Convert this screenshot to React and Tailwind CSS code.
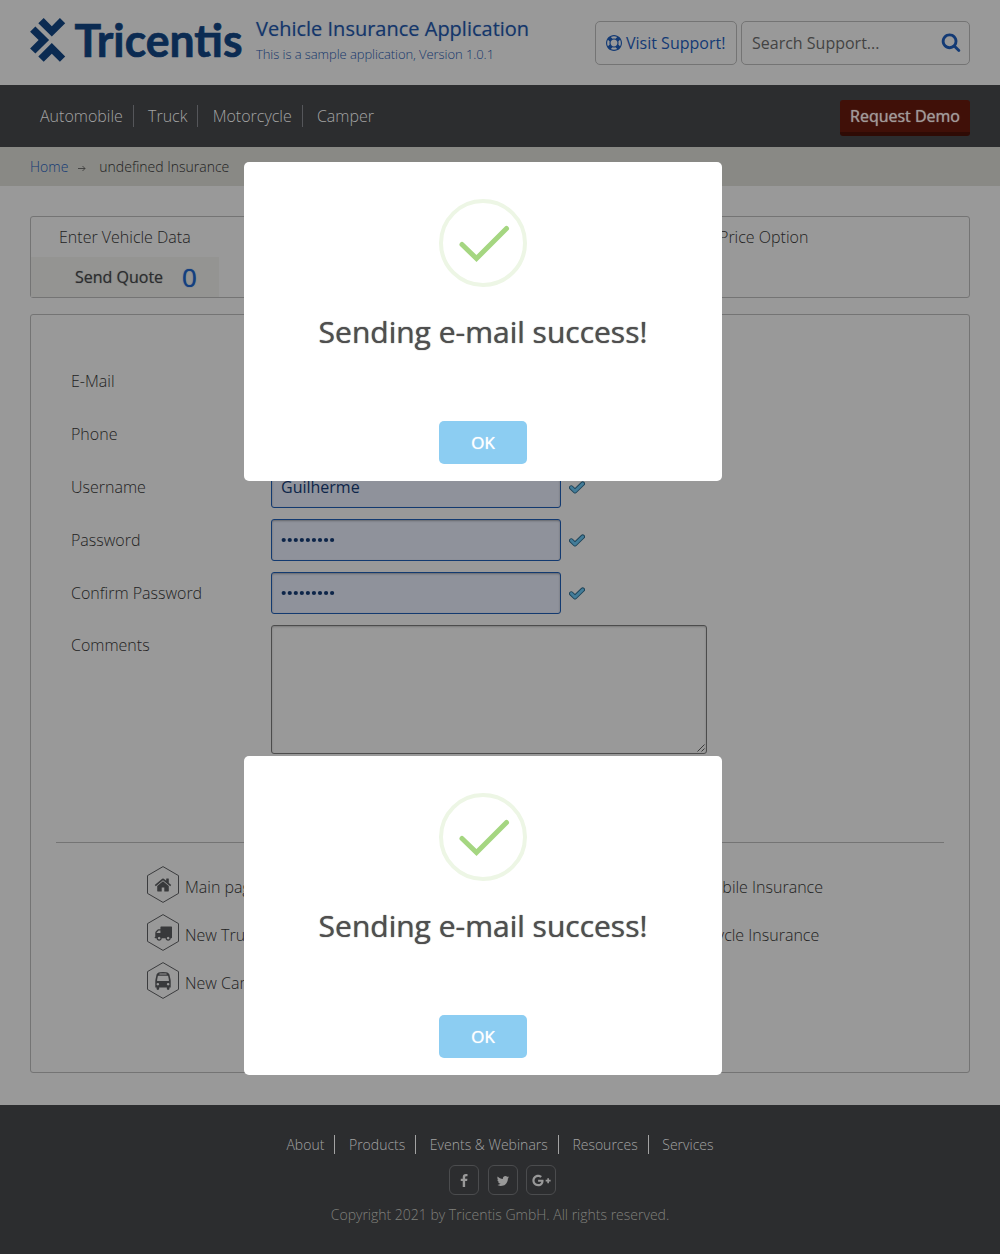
import React from "react";
import { FaGooglePlusG } from "react-icons/fa";

const ICONS = {
  home: "M1472 992v480q0 26-19 45t-45 19h-384v-384h-256v384h-384q-26 0-45-19t-19-45v-480q0-1 .5-3t.5-3l575-474 575 474q1 2 1 6zm223-69l-62 74q-8 9-21 11h-3q-13 0-21-7l-692-577-692 577q-12 8-24 7-13-2-21-11l-62-74q-8-10-7-23.5t11-21.5l719-599q32-26 76-26t76 26l244 204v-195q0-14 9-23t23-9h192q14 0 23 9t9 23v408l219 182q10 8 11 21.5t-7 23.5z",
  truck:
    "M640 1408q0-52-38-90t-90-38-90 38-38 90 38 90 90 38 90-38 38-90zm-384-512h384v-256h-158q-13 0-22 9l-195 195q-9 9-9 22v30zm1280 512q0-52-38-90t-90-38-90 38-38 90 38 90 90 38 90-38 38-90zm256-1088v1024q0 15-4 26.5t-13.5 18.5-16.5 11.5-23.5 6-22.5 2-25.5 0-22.5-.5q0 106-75 181t-181 75-181-75-75-181h-384q0 106-75 181t-181 75-181-75-75-181h-64q-3 0-22.5.5t-25.5 0-22.5-2-23.5-6-16.5-11.5-13.5-18.5-4-26.5q0-26 19-45t45-19v-320q0-8-.5-35t0-38 2.5-34.5 6.5-37 14-30.5 22.5-30l198-198q19-19 50.5-32t58.5-13h160v-192q0-26 19-45t45-19h1024q26 0 45 19t19 45z",
  bus: "M512 1216q0-53-37.5-90.5t-90.5-37.5-90.5 37.5-37.5 90.5 37.5 90.5 90.5 37.5 90.5-37.5 37.5-90.5zm1024 0q0-53-37.5-90.5t-90.5-37.5-90.5 37.5-37.5 90.5 37.5 90.5 90.5 37.5 90.5-37.5 37.5-90.5zm-46-396l-72-384q-5-23-22.5-37.5t-40.5-14.5h-918q-23 0-40.5 14.5t-22.5 37.5l-72 384q-5 30 14 53t49 23h1062q30 0 49-23t14-53zm-226-612q0-20-14-34t-34-14h-640q-20 0-34 14t-14 34 14 34 34 14h640q20 0 34-14t14-34zm400 725v603h-128v128q0 53-37.5 90.5t-90.5 37.5-90.5-37.5-37.5-90.5v-128h-768v128q0 53-37.5 90.5t-90.5 37.5-90.5-37.5-37.5-90.5v-128h-128v-603q0-112 25-223l103-454q9-78 97.5-137t230-89 312.5-30 312.5 30 230 89 97.5 137l105 454q23 102 23 223z",
  ring: "M896 0q182 0 348 71t286 191 191 286 71 348-71 348-191 286-286 191-348 71-348-71-286-191-191-286-71-348 71-348 191-286 286-191 348-71zm0 128q-190 0-361 90l194 194q82-28 167-28t167 28l194-194q-171-90-361-90zm-678 1129l194-194q-28-82-28-167t28-167l-194-194q-90 171-90 361t90 361zm678 407q190 0 361-90l-194-194q-82 28-167 28t-167-28l-194 194q171 90 361 90zm0-384q159 0 271.5-112.5t112.5-271.5-112.5-271.5-271.5-112.5-271.5 112.5-112.5 271.5 112.5 271.5 271.5 112.5zm484-217l194 194q90-171 90-361t-90-361l-194 194q28 82 28 167t-28 167z",
  search:
    "M1216 832q0-185-131.5-316.5t-316.5-131.5-316.5 131.5-131.5 316.5 131.5 316.5 316.5 131.5 316.5-131.5 131.5-316.5zm512 832q0 52-38 90t-90 38q-54 0-90-38l-343-342q-179 124-399 124-143 0-273.5-55.5t-225-150-150-225-55.5-273.5 55.5-273.5 150-225 225-150 273.5-55.5 273.5 55.5 225 150 150 225 55.5 273.5q0 220-124 399l343 343q37 37 37 90z",
  facebook:
    "M1343 12v264h-157q-86 0-116 36t-30 108v189h293l-39 296h-254v759h-306v-759h-255v-296h255v-218q0-186 104-288.5t277-102.5q147 0 228 12z",
  twitter:
    "M1684 408q-67 98-162 167 1 14 1 42 0 130-38 259.5t-115.5 248.5-184.5 210.5-258 146-323 54.5q-271 0-496-145 35 4 78 4 225 0 401-138-105-2-188-64.5t-114-159.5q33 5 61 5 43 0 85-11-112-23-185.5-111.5t-73.5-205.5v-4q68 38 146 41-66-44-105-115t-39-154q0-88 44-163 121 149 294.5 238.5t371.5 99.5q-8-38-8-74 0-134 94.5-228.5t228.5-94.5q140 0 236 102 109-21 205-78-37 115-142 178 93-10 186-50z",
};

function Icon({ name, className }) {
  return (
    <svg viewBox="0 0 1792 1792" fill="currentColor" className={className}>
      <path d={ICONS[name]} />
    </svg>
  );
}

function Logo() {
  return (
    <svg width="214" height="48" viewBox="30 16 214 48" className="shrink-0 overflow-visible" fill="#0b2b52">
      <path d="M38.3 23.3 43.7 18.1 51.8 26.2 59.9 18.1 65.2 23.3 51.8 36.6Z" />
      <path d="M35.4 26.5 49.1 40 35.4 53.6 30.1 48.4 38.6 40 30.1 31.7Z" />
      <path d="M51.8 43 65.2 56.4 59.9 61.8 51.8 53.7 43.7 61.8 38.3 56.6Z" />
      <text
        x="74.5"
        y="56.5"
        textLength="168"
        lengthAdjust="spacingAndGlyphs"
        stroke="#0b2b52"
        strokeWidth="0.7"
        className="text-[46px] font-bold [font-family:Lato,sans-serif]"
      >
        Tricentis
      </text>
    </svg>
  );
}

function Header() {
  return (
    <header className="flex h-[85px] items-start pl-[30px] pr-[30px]">
      <div className="pt-4">
        <Logo />
      </div>
      <div className="pl-3 pt-[14px] text-[#14366b]">
        <div className="text-[20px] leading-[30px] whitespace-nowrap [text-shadow:0_0_1px_#14366b66]">
          Vehicle Insurance Application
        </div>
        <div className="text-[13px] leading-5 font-light tracking-[-0.07px] whitespace-nowrap">
          This is a sample application, Version 1.0.1
        </div>
      </div>
      <div className="ml-auto flex gap-1 pt-[21px]">
        <div className="flex h-11 w-[142px] items-center gap-1 rounded-[5px] border border-[#747474] pl-[10px] text-[16px] whitespace-nowrap text-[#133a75]">
          <Icon name="ring" className="size-4 shrink-0" />
          Visit Support!
        </div>
        <div className="flex h-11 w-[229px] items-center justify-between rounded-[5px] border border-[#747474] pr-2 pl-[10px] text-[16px] text-[#434343]">
          Search Support...
          <Icon name="search" className="mb-[2px] size-5 text-[#133a75]" />
        </div>
      </div>
    </header>
  );
}

function Nav() {
  return (
    <nav className="flex h-[62px] items-center justify-between bg-[#2c2d2f] px-[30px]">
      <ul className="flex text-[16px] leading-[22px] font-light text-[#a3a3a3]">
        {["Automobile", "Truck", "Motorcycle", "Camper"].map((item) => (
          <li
            key={item}
            className="mr-[4.2px] border-r border-[#55565a] px-[10px] last:border-0"
          >
            {item}
          </li>
        ))}
      </ul>
      <div className="mt-[4px] h-9 w-[130px] rounded-[3px] border-b-4 border-[#2f0b05] bg-[#401008] text-center text-[16px] leading-8 text-[#a09a98] [text-shadow:0_0_1px_#a09a98]">
        Request Demo
      </div>
    </nav>
  );
}

function Breadcrumb() {
  return (
    <div className="flex h-[39px] items-center bg-[#898985] px-[30px] text-[14px] font-light text-[#222]">
      <span className="text-[#133a75]">Home</span>
      <svg viewBox="0 0 8 7" className="mt-1 ml-[10px] h-[7px] w-2" fill="none" stroke="#333" strokeWidth="0.8">
        <path d="M0 3.5H7M4.5 1 7 3.5 4.5 6" />
      </svg>
      <span className="ml-[13px]">undefined Insurance</span>
    </div>
  );
}

function Steps() {
  return (
    <section className="mx-[30px] mt-[30px] h-[82px] rounded-[3px] border border-[#747474] text-[16px] font-light text-[#222]">
      <div className="flex h-[40px] items-center whitespace-nowrap">
        <span className="w-[219px] pl-7">Enter Vehicle Data</span>
        <span className="w-[205px]">Enter Insurant Data</span>
        <span className="w-[217px]">Enter Product Data</span>
        <span>Select Price Option</span>
      </div>
      <div className="flex h-10 w-[188px] items-center bg-[#949492] pl-11 font-normal text-[#2c2d2f] [text-shadow:0_0_1px_#2c2d2f88]">
        Send Quote
        <span className="ml-[19px] text-[26px] text-[#133f80] [text-shadow:0_0_1px_#133f80]">0</span>
      </div>
    </section>
  );
}

function ValidMark() {
  return (
    <svg viewBox="0 0 16 13" className="mt-[2px] ml-2 h-[13px] w-4">
      <path
        d="M2.3 6.6 6 10.2 13.7 2.7"
        fill="none"
        stroke="#1d4257"
        strokeWidth="4.6"
        strokeLinecap="round"
        strokeLinejoin="round"
      />
      <path
        d="M2.3 6.6 6 10.2 13.7 2.7"
        fill="none"
        stroke="#437c98"
        strokeWidth="2.8"
        strokeLinecap="round"
        strokeLinejoin="round"
      />
    </svg>
  );
}

function Field({ label, value, dots }) {
  return (
    <div className="flex h-[53px] items-center">
      <label className="w-[200px]">{label}</label>
      <div className="flex h-[42px] w-[290px] items-center rounded-[3px] border border-[#133a70] bg-[#8f929b] pl-[9px] font-normal text-[#0d2549] shadow-[inset_0_1px_2px_#0000004d]">
        {value}
        {dots && (
          <svg viewBox="0 0 54 6" className="h-[6px] w-[54px]" fill="currentColor">
            {Array.from({ length: dots }, (_, i) => (
              <circle key={i} cx={2.7 + i * 6.05} cy="3" r="2.1" />
            ))}
          </svg>
        )}
      </div>
      <ValidMark />
    </div>
  );
}

function HexLink({ icon, children }) {
  return (
    <div className="flex h-12 items-start whitespace-nowrap">
      <div className="grid h-[37px] w-8 place-items-center [grid-template-areas:'stack']">
        <svg
          viewBox="0 0 32 37"
          className="h-[37px] w-8 [grid-area:stack]"
          fill="none"
          stroke="#3b3c3e"
          strokeWidth="1"
        >
          <path d="M16 .6 31.5 9.6V27.4L16 36.4.5 27.4V9.6Z" />
        </svg>
        <Icon name={icon} className="size-[18px] text-[#38393b] [grid-area:stack]" />
      </div>
      <span className="ml-[6px] pt-[9px] leading-6">{children}</span>
    </div>
  );
}

function QuoteForm() {
  return (
    <section className="mx-[30px] mt-4 h-[759px] rounded-[3px] border border-[#747474] text-[16px] font-light text-[#222]">
      <div className="pt-[39px] pl-10">
        <Field label="E-Mail" />
        <Field label="Phone" />
        <Field label="Username" value="Guilherme" />
        <Field label="Password" dots={9} />
        <Field label="Confirm Password" dots={9} />
        <div className="flex pt-[6px]">
          <label className="w-[200px] pt-2">Comments</label>
          <div className="flex h-[129px] w-[436px] items-end justify-end rounded-[3px] border border-[#4c4c4c] p-[1px] shadow-[inset_0_1px_2px_#00000033]">
            <svg viewBox="0 0 8 8" className="size-2" fill="none" stroke="#222" strokeWidth="0.8">
              <path d="M.5 7.500 7.500.5M4.500 7.500 7.500 4.500" />
            </svg>
          </div>
        </div>
      </div>
      <hr className="mx-[25px] mt-[88px] border-[#747474]" />
      <div className="flex pt-[23px] pl-[116px]">
        <div className="w-[444px]">
          <HexLink icon="home">Main page</HexLink>
          <HexLink icon="truck">New Truck Insurance</HexLink>
          <HexLink icon="bus">New Camper Insurance</HexLink>
        </div>
        <div>
          <HexLink icon="home">New Automobile Insurance</HexLink>
          <HexLink icon="truck">New Motorcycle Insurance</HexLink>
        </div>
      </div>
    </section>
  );
}

function Footer() {
  return (
    <footer className="mt-8 flex h-[149px] flex-col items-center bg-[#2c2d2f] pt-[30px] text-[14px] font-light text-[#a3a3a3]">
      <ul className="flex leading-[19px]">
        {["About", "Products", "Events & Webinars", "Resources", "Services"].map((item) => (
          <li key={item} className="mr-[3.6px] border-r border-[#a3a3a3] px-[10px] last:mr-0 last:border-0">
            {item}
          </li>
        ))}
      </ul>
      <div className="mt-[11px] ml-[5px] flex gap-[9px] text-[#999]">
        <span className="grid size-[30px] place-items-center rounded-[6px] border border-[#4b4c4e]">
          <Icon name="facebook" className="mt-px size-[14px]" />
        </span>
        <span className="grid size-[30px] place-items-center rounded-[6px] border border-[#4b4c4e]">
          <Icon name="twitter" className="mt-[2px] mr-px size-[14px]" />
        </span>
        <span className="-ml-px grid size-[30px] place-items-center rounded-[6px] border border-[#4b4c4e]">
          <FaGooglePlusG className="mt-px size-[19px]" />
        </span>
      </div>
      <div className="mt-[10px] leading-5 text-[#80807c]">Copyright 2021 by Tricentis GmbH. All rights reserved.</div>
    </footer>
  );
}

function Dialog({ className }) {
  return (
    <div
      className={`absolute left-[244px] flex h-[319px] w-[478px] flex-col items-center rounded-[5px] bg-white pt-[37px] ${className}`}
    >
      <svg viewBox="0 0 88 88" className="size-[88px]" fill="none">
        <circle cx="44" cy="44" r="42" stroke="#edf6e5" strokeWidth="4" />
        <path d="M23 45.500 37.500 59.500 67.500 29.500" stroke="#a5d681" strokeWidth="5" strokeLinecap="round" />
      </svg>
      <h2 className="mt-[25px] text-[30px] leading-10 text-[#4f4f4f] [text-shadow:0_0_1px_#4f4f4f]">
        Sending e-mail success!
      </h2>
      <button className="mt-[69px] h-[43px] w-[88px] rounded-[5px] bg-[#8ccdf2] text-[17px] text-white [text-shadow:0_0_1px_#fff]">
        OK
      </button>
    </div>
  );
}

export default function App() {
  return (
    <div className="relative h-[1254px] w-[1000px] overflow-hidden bg-[#999] [font-family:'Open_Sans',sans-serif]">
      <Header />
      <Nav />
      <Breadcrumb />
      <Steps />
      <QuoteForm />
      <Footer />
      <Dialog className="top-[162px]" />
      <Dialog className="top-[756px]" />
    </div>
  );
}
